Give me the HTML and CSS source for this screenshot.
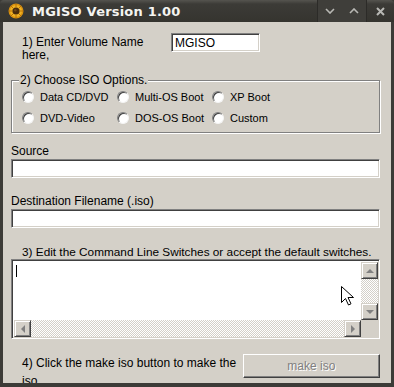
FILE: index.html
```html
<!DOCTYPE html>
<html lang="en">
<head>
    <meta charset="UTF-8">
    <meta name="viewport" content="width=device-width, initial-scale=1.0">
    <title>MGISO Version 1.00</title>
    <link rel="stylesheet" href="styles.css">
</head>
<body>
    <div class="window">
        <div class="titlebar">
            <svg class="app-icon" width="16" height="16" viewBox="0 0 16 16">
                <circle cx="8" cy="8" r="7.5" fill="#d9920f"/>
                <circle cx="8" cy="8" r="6" fill="#f0b323"/>
                <path d="M8 1v3M8 12v3M1 8h3M12 8h3M3 3l2 2M11 11l2 2M13 3l-2 2M5 11l-2 2" stroke="#b86e08" stroke-width="1"/>
                <circle cx="8" cy="8" r="3.6" fill="#4a2c0c"/>
                <circle cx="7.3" cy="7.3" r="1.2" fill="#6e4616"/>
            </svg>
            <span class="title">MGISO Version 1.00</span>
            <div class="controls">
                <div class="ctl-group">
                    <span class="ctl">
                        <svg width="10" height="6" viewBox="0 0 10 6"><path d="M1 1l4 4 4-4" fill="none" stroke="#b8b8b4" stroke-width="1.6"/></svg>
                    </span>
                    <span class="ctl">
                        <svg width="10" height="6" viewBox="0 0 10 6"><path d="M1 5l4-4 4 4" fill="none" stroke="#b8b8b4" stroke-width="1.6"/></svg>
                    </span>
                </div>
                <span class="ctl close">
                    <svg width="9" height="9" viewBox="0 0 9 9"><path d="M1 1l7 7M8 1l-7 7" stroke="#b8b8b4" stroke-width="2"/></svg>
                </span>
            </div>
        </div>

        <div class="client">
            <div class="volume-row">
                <label class="volume-label" for="volume">1) Enter Volume Name here,</label>
                <input class="field volume-input" id="volume" type="text" value="MGISO">
            </div>

            <fieldset class="options">
                <legend>2) Choose ISO Options.</legend>
                <div class="radio-grid">
                    <label class="radio"><span class="dot"></span>Data CD/DVD</label>
                    <label class="radio"><span class="dot"></span>Multi-OS Boot</label>
                    <label class="radio"><span class="dot"></span>XP Boot</label>
                    <label class="radio"><span class="dot"></span>DVD-Video</label>
                    <label class="radio"><span class="dot"></span>DOS-OS Boot</label>
                    <label class="radio"><span class="dot"></span>Custom</label>
                </div>
            </fieldset>

            <label class="field-label" for="source">Source</label>
            <input class="field wide" id="source" type="text">

            <label class="field-label dest" for="dest">Destination Filename (.iso)</label>
            <input class="field wide" id="dest" type="text">

            <div class="switch-label">3) Edit the Command Line Switches or accept the default switches.</div>
            <div class="memo">
                <div class="memo-text"><span class="caret"></span></div>
                <div class="vscroll">
                    <span class="sbtn"><span class="arrow up"></span></span>
                    <span class="track"></span>
                    <span class="sbtn"><span class="arrow down"></span></span>
                </div>
                <div class="hscroll">
                    <span class="sbtn"><span class="arrow left"></span></span>
                    <span class="track"></span>
                    <span class="sbtn"><span class="arrow right"></span></span>
                </div>
                <div class="corner"></div>
            </div>

            <div class="make-row">
                <div class="make-label">4) Click the make iso button to make the iso</div>
                <button class="make-btn" disabled>make iso</button>
            </div>
        </div>

        <!-- mouse pointer left over the memo box -->
        <svg class="pointer" width="13" height="20" viewBox="0 0 13 20">
            <path d="M0.5 0.5v16l4-4 3 6.5 2.5-1.2-3-6.3h5.5z" fill="#fff" stroke="#000" stroke-width="1"/>
        </svg>
    </div>
</body>
</html>
```

FILE: styles.css
```css
body {
    margin: 0;
    font-family: 'Liberation Sans', Arial, sans-serif;
    font-size: 12px;
    color: #000;
    background: #2e2e2c;
}

.window {
    position: relative;
    width: 394px;
    height: 387px;
    box-sizing: border-box;
    display: flex;
    flex-direction: column;
    overflow: hidden;
    background: #3c3b37;
}

.titlebar {
    height: 22px;
    flex: none;
    display: flex;
    align-items: center;
    background: linear-gradient(#55544f, #3c3b37 4px, #35342f);
    border-radius: 4px 4px 0 0;
}

.app-icon {
    margin-left: 8px;
    margin-right: 8px;
}

.title {
    color: #f4f4f0;
    font-family: 'DejaVu Sans', sans-serif;
    font-weight: bold;
    font-size: 13px;
    letter-spacing: 0.2px;
}

.controls {
    margin-left: auto;
    display: flex;
    height: 22px;
}

.ctl-group {
    display: flex;
    border-left: 1px solid #2c2b28;
    border-right: 1px solid #2c2b28;
    background: #3f3e3a;
}

.ctl {
    width: 24px;
    display: flex;
    align-items: center;
    justify-content: center;
}

.ctl.close {
    width: 27px;
}

.client {
    flex: 1;
    margin: 0 3px 4px 3px;
    padding: 0 11px 0 8px;
    background: #d4d0c8;
    overflow: hidden;
}

.volume-row {
    display: flex;
    align-items: flex-start;
    margin-top: 11px;
    padding-left: 11px;
}

.volume-label {
    width: 149px;
    padding-top: 3px;
    line-height: 13px;
}

.field {
    display: block;
    box-sizing: border-box;
    height: 19px;
    margin: 0;
    padding: 1px 3px;
    font-family: inherit;
    font-size: 12px;
    background: #fff;
    border: 1px solid;
    border-color: #808080 #fff #fff #808080;
    box-shadow: inset 1px 1px 0 #404040, inset -1px -1px 0 #d4d0c8;
    outline: none;
}

.volume-input {
    width: 89px;
}

.wide {
    width: 369px;
}

.options {
    margin: 12px 0 0 0;
    padding: 0 0 0 10px;
    border: 1px solid #808080;
    box-shadow: 1px 1px 0 #fff, inset 1px 1px 0 #fff;
    width: 369px;
    box-sizing: border-box;
    height: 59px;
}

.options legend {
    margin-left: -3px;
    padding: 0 1px;
    line-height: 13px;
    background: #d4d0c8;
}

.radio-grid {
    display: grid;
    grid-template-columns: 95px 95px 95px;
    grid-auto-rows: 21px;
    margin-top: -1px;
    font-size: 11px;
}

.radio {
    display: flex;
    align-items: center;
    gap: 6px;
}

.dot {
    width: 12px;
    height: 12px;
    box-sizing: border-box;
    border-radius: 50%;
    border: 1px solid;
    border-color: #808080 #f4f4f4 #f4f4f4 #808080;
    background: #fff;
    box-shadow: inset 1px 1px 0 #404040;
}

.field-label {
    display: block;
    line-height: 14px;
    margin-top: 11px;
    margin-bottom: 1px;
}

.field-label.dest {
    margin-top: 16px;
}

.switch-label {
    line-height: 14px;
    margin-top: 17px;
    padding-left: 11px;
    font-size: 11.8px;
}

.memo {
    width: 369px;
    height: 80px;
    box-sizing: border-box;
    background: #fff;
    border: 1px solid;
    border-color: #808080 #fff #fff #808080;
    box-shadow: inset 1px 1px 0 #404040, inset -1px -1px 0 #d4d0c8;
    padding: 2px 1px 1px 2px;
    display: grid;
    grid-template-columns: 1fr 17px;
    grid-template-rows: 1fr 17px;
}

.memo-text {
    padding: 3px 2px;
}

.caret {
    display: block;
    width: 1px;
    height: 12px;
    background: #000;
}

.vscroll,
.hscroll {
    display: flex;
    background: repeating-conic-gradient(#d4d0c8 0 25%, #fff 0 50%) 0 0 / 2px 2px;
}

.vscroll {
    flex-direction: column;
}

.track {
    flex: 1;
}

.sbtn {
    width: 17px;
    height: 17px;
    flex: none;
    box-sizing: border-box;
    background: #d4d0c8;
    border: 1px solid;
    border-color: #d4d0c8 #404040 #404040 #d4d0c8;
    box-shadow: inset 1px 1px 0 #fff, inset -1px -1px 0 #808080;
    display: flex;
    align-items: center;
    justify-content: center;
}

.arrow {
    width: 0;
    height: 0;
    border: 4px solid transparent;
}

.arrow.up {
    border-bottom-color: #808080;
    border-top-width: 0;
}

.arrow.down {
    border-top-color: #808080;
    border-bottom-width: 0;
}

.arrow.left {
    border-right-color: #808080;
    border-left-width: 0;
}

.arrow.right {
    border-left-color: #808080;
    border-right-width: 0;
}

.corner {
    background: #d4d0c8;
}

.make-row {
    display: flex;
    align-items: flex-start;
    margin-top: 15px;
    padding-left: 11px;
}

.make-label {
    width: 222px;
    font-size: 12px;
    line-height: 18px;
}

.make-btn {
    margin-left: auto;
    width: 138px;
    height: 24px;
    font-family: inherit;
    font-size: 12px;
    color: #808080;
    text-shadow: 1px 1px 0 #fff;
    background: #d4d0c8;
    border: 1px solid;
    border-color: #fff #404040 #404040 #fff;
    box-shadow: inset -1px -1px 0 #808080;
    padding: 0;
}

.pointer {
    position: absolute;
    left: 341px;
    top: 286px;
}
```
